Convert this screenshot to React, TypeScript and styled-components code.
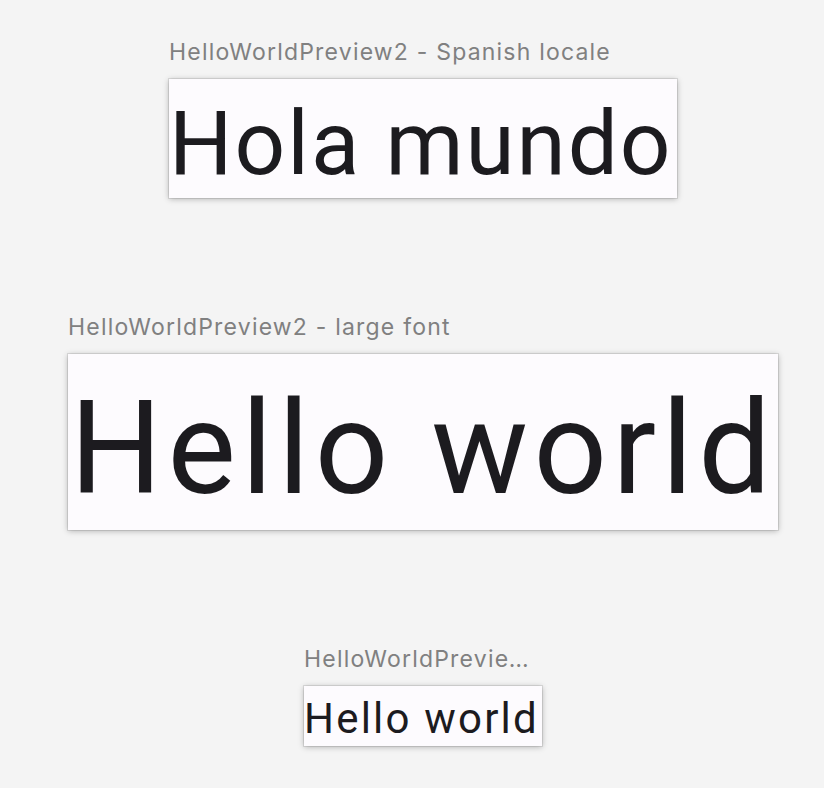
import React from "react";
import styled, { createGlobalStyle } from "styled-components";

const Global = createGlobalStyle`
  html, body {
    margin: 0;
    padding: 0;
    background: #f4f4f4;
  }
  body {
    font-family: Inter, "Noto Sans", "Liberation Sans", sans-serif;
  }
`;

const Page = styled.main`
  display: flex;
  flex-direction: column;
  align-items: center;
  gap: 116px;
  min-height: 788px;
  box-sizing: border-box;
  padding: 39px 0 0 22px;
  background: #f4f4f4;
`;

const Preview = styled.section<{ $w: number }>`
  display: flex;
  flex-direction: column;
  gap: 14px;
  width: ${(p) => p.$w}px;
`;

const Title = styled.div`
  font-family: Inter, "Noto Sans", "Liberation Sans", sans-serif;
  font-size: 23px;
  line-height: 26px;
  color: #808080;
  white-space: nowrap;
  overflow: hidden;
  text-overflow: ellipsis;
  letter-spacing: 1.2px;
`;

const Frame = styled.div<{
  $h: number;
  $size: number;
  $track: number;
  $pt: number;
  $pl: number;
}>`
  box-sizing: border-box;
  height: ${(p) => p.$h}px;
  padding: ${(p) => p.$pt}px 0 0 ${(p) => p.$pl}px;
  background: #fdfbfe;
  box-shadow: 0 0 0 1px rgba(0, 0, 0, 0.09), 0 1px 6px rgba(0, 0, 0, 0.28);
  overflow: hidden;
  font-family: Roboto, "Noto Sans", sans-serif;
  font-size: ${(p) => p.$size}px;
  line-height: ${(p) => p.$h - p.$pt}px;
  letter-spacing: ${(p) => p.$track}px;
  color: #1c1b1f;
  white-space: nowrap;
`;

type Item = {
  title: string;
  text: string;
  w: number;
  h: number;
  size: number;
  track: number;
  pt: number;
  pl: number;
};

const items: Item[] = [
  {
    title: "HelloWorldPreview2 - Spanish locale",
    text: "Hola mundo",
    w: 508,
    h: 119,
    size: 89,
    track: 2,
    pt: 10,
    pl: 0,
  },
  {
    title: "HelloWorldPreview2 - large font",
    text: "Hello world",
    w: 710,
    h: 176,
    size: 129,
    track: 5.4,
    pt: 14,
    pl: 2,
  },
  {
    title: "HelloWorldPreview2 - default",
    text: "Hello world",
    w: 238,
    h: 60,
    size: 42,
    track: 2.2,
    pt: 5,
    pl: 0,
  },
];

export default function App() {
  return (
    <>
      <Global />
      <Page>
        {items.map((it, i) => (
          <Preview key={i} $w={it.w}>
            <Title>{it.title}</Title>
            <Frame $h={it.h} $size={it.size} $track={it.track} $pt={it.pt} $pl={it.pl}>
              {it.text}
            </Frame>
          </Preview>
        ))}
      </Page>
    </>
  );
}
